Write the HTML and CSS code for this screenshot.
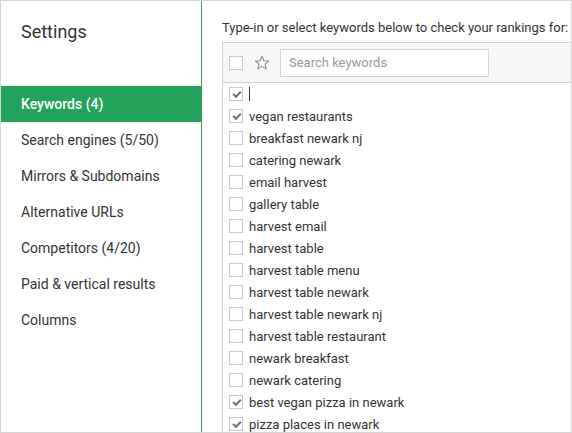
FILE: index.html
```html
<!DOCTYPE html>
<html>
<head>
<meta charset="utf-8">
<link rel="stylesheet" href="styles.css">
</head>
<body>
<div class="window">
  <aside class="sidebar">
    <h1 class="title">Settings</h1>
    <nav class="menu">
      <div class="menu-item active">Keywords (4)</div>
      <div class="menu-item">Search engines (5/50)</div>
      <div class="menu-item">Mirrors &amp; Subdomains</div>
      <div class="menu-item">Alternative URLs</div>
      <div class="menu-item">Competitors (4/20)</div>
      <div class="menu-item">Paid &amp; vertical results</div>
      <div class="menu-item">Columns</div>
    </nav>
  </aside>
  <main class="main">
    <p class="lead">Type-in or select keywords below to check your rankings for:</p>
    <div class="table">
      <div class="toolbar">
        <span class="cb"></span>
        <svg class="star" width="16" height="16" viewBox="0 0 16 16"><path d="M8 1.2l1.9 4.5 4.8.4-3.7 3.1 1.2 4.7L8 11.4l-4.2 2.5 1.2-4.7-3.7-3.1 4.8-.4z" fill="none" stroke="#8a8a8a" stroke-width="1.1" stroke-linejoin="round"/></svg>
        <div class="search">Search keywords</div>
      </div>
      <div class="rows">
        <div class="row"><span class="cb checked"></span><span class="caret"></span></div>
        <div class="row"><span class="cb checked"></span><span class="kw">vegan restaurants</span></div>
        <div class="row"><span class="cb"></span><span class="kw">breakfast newark nj</span></div>
        <div class="row"><span class="cb"></span><span class="kw">catering newark</span></div>
        <div class="row"><span class="cb"></span><span class="kw">email harvest</span></div>
        <div class="row"><span class="cb"></span><span class="kw">gallery table</span></div>
        <div class="row"><span class="cb"></span><span class="kw">harvest email</span></div>
        <div class="row"><span class="cb"></span><span class="kw">harvest table</span></div>
        <div class="row"><span class="cb"></span><span class="kw">harvest table menu</span></div>
        <div class="row"><span class="cb"></span><span class="kw">harvest table newark</span></div>
        <div class="row"><span class="cb"></span><span class="kw">harvest table newark nj</span></div>
        <div class="row"><span class="cb"></span><span class="kw">harvest table restaurant</span></div>
        <div class="row"><span class="cb"></span><span class="kw">newark breakfast</span></div>
        <div class="row"><span class="cb"></span><span class="kw">newark catering</span></div>
        <div class="row"><span class="cb checked"></span><span class="kw">best vegan pizza in newark</span></div>
        <div class="row"><span class="cb checked"></span><span class="kw">pizza places in newark</span></div>
      </div>
    </div>
  </main>
</div>
</body>
</html>
```
FILE: styles.css
```css
* { box-sizing: border-box; }
html, body { margin: 0; padding: 0; background: #fff; }
body { font-family: Roboto, "Liberation Sans", sans-serif; color: #333; }
.window {
  width: 572px; height: 433px;
  border: 1px solid #d5d5d5;
  display: flex;
  overflow: hidden;
}
.sidebar {
  width: 201px; flex: none;
  border-right: 1px solid #21a35a;
}
.title {
  margin: 0;
  padding: 19px 0 0 20px;
  height: 85px;
  font-size: 18px; font-weight: 400; line-height: 24px;
  color: #333;
}
.menu-item {
  height: 36px; line-height: 36px;
  padding-left: 20px;
  font-size: 14px; color: #333;
  white-space: nowrap;
}
.menu-item.active { background: #21a35a; color: #fff; font-weight: 500; }
.main {
  flex: 1; min-width: 0;
  padding: 18px 0 0 20px;
  overflow: hidden;
}
.lead {
  margin: 0; height: 23px; line-height: 18px;
  font-size: 13px; color: #333; white-space: nowrap;
}
.table {
  width: 400px;
  border-left: 1px solid #d3d3d3;
  border-top: 1px solid #d3d3d3;
}
.toolbar {
  height: 40px;
  background: #f7f7f7;
  border-bottom: 1px solid #d3d3d3;
  display: flex; align-items: center;
  padding-left: 6px;
}
.star { margin-left: 11px; flex: none; }
.search {
  margin-left: 10px;
  width: 209px; height: 28px;
  border: 1px solid #d6d6d6; background: #fff;
  font-size: 13px; line-height: 26px; color: #9a9a9a;
  padding-left: 8px;
}
.row {
  height: 22px;
  display: flex; align-items: center;
  padding-left: 6px;
}
.cb {
  width: 14px; height: 14px; flex: none;
  border: 1px solid #c9c9c9; background: #fff;
  position: relative;
}
.cb.checked::after {
  content: "";
  position: absolute;
  left: 3px; top: 1px;
  width: 6px; height: 3px;
  border-left: 2px solid #6b6b6b;
  border-bottom: 2px solid #6b6b6b;
  transform: translate(0, 2px) rotate(-45deg);
}
.kw { margin-left: 6px; font-size: 13px; color: #333; white-space: nowrap; }
.caret { margin-left: 6px; width: 1px; height: 14px; background: #333; }
```
